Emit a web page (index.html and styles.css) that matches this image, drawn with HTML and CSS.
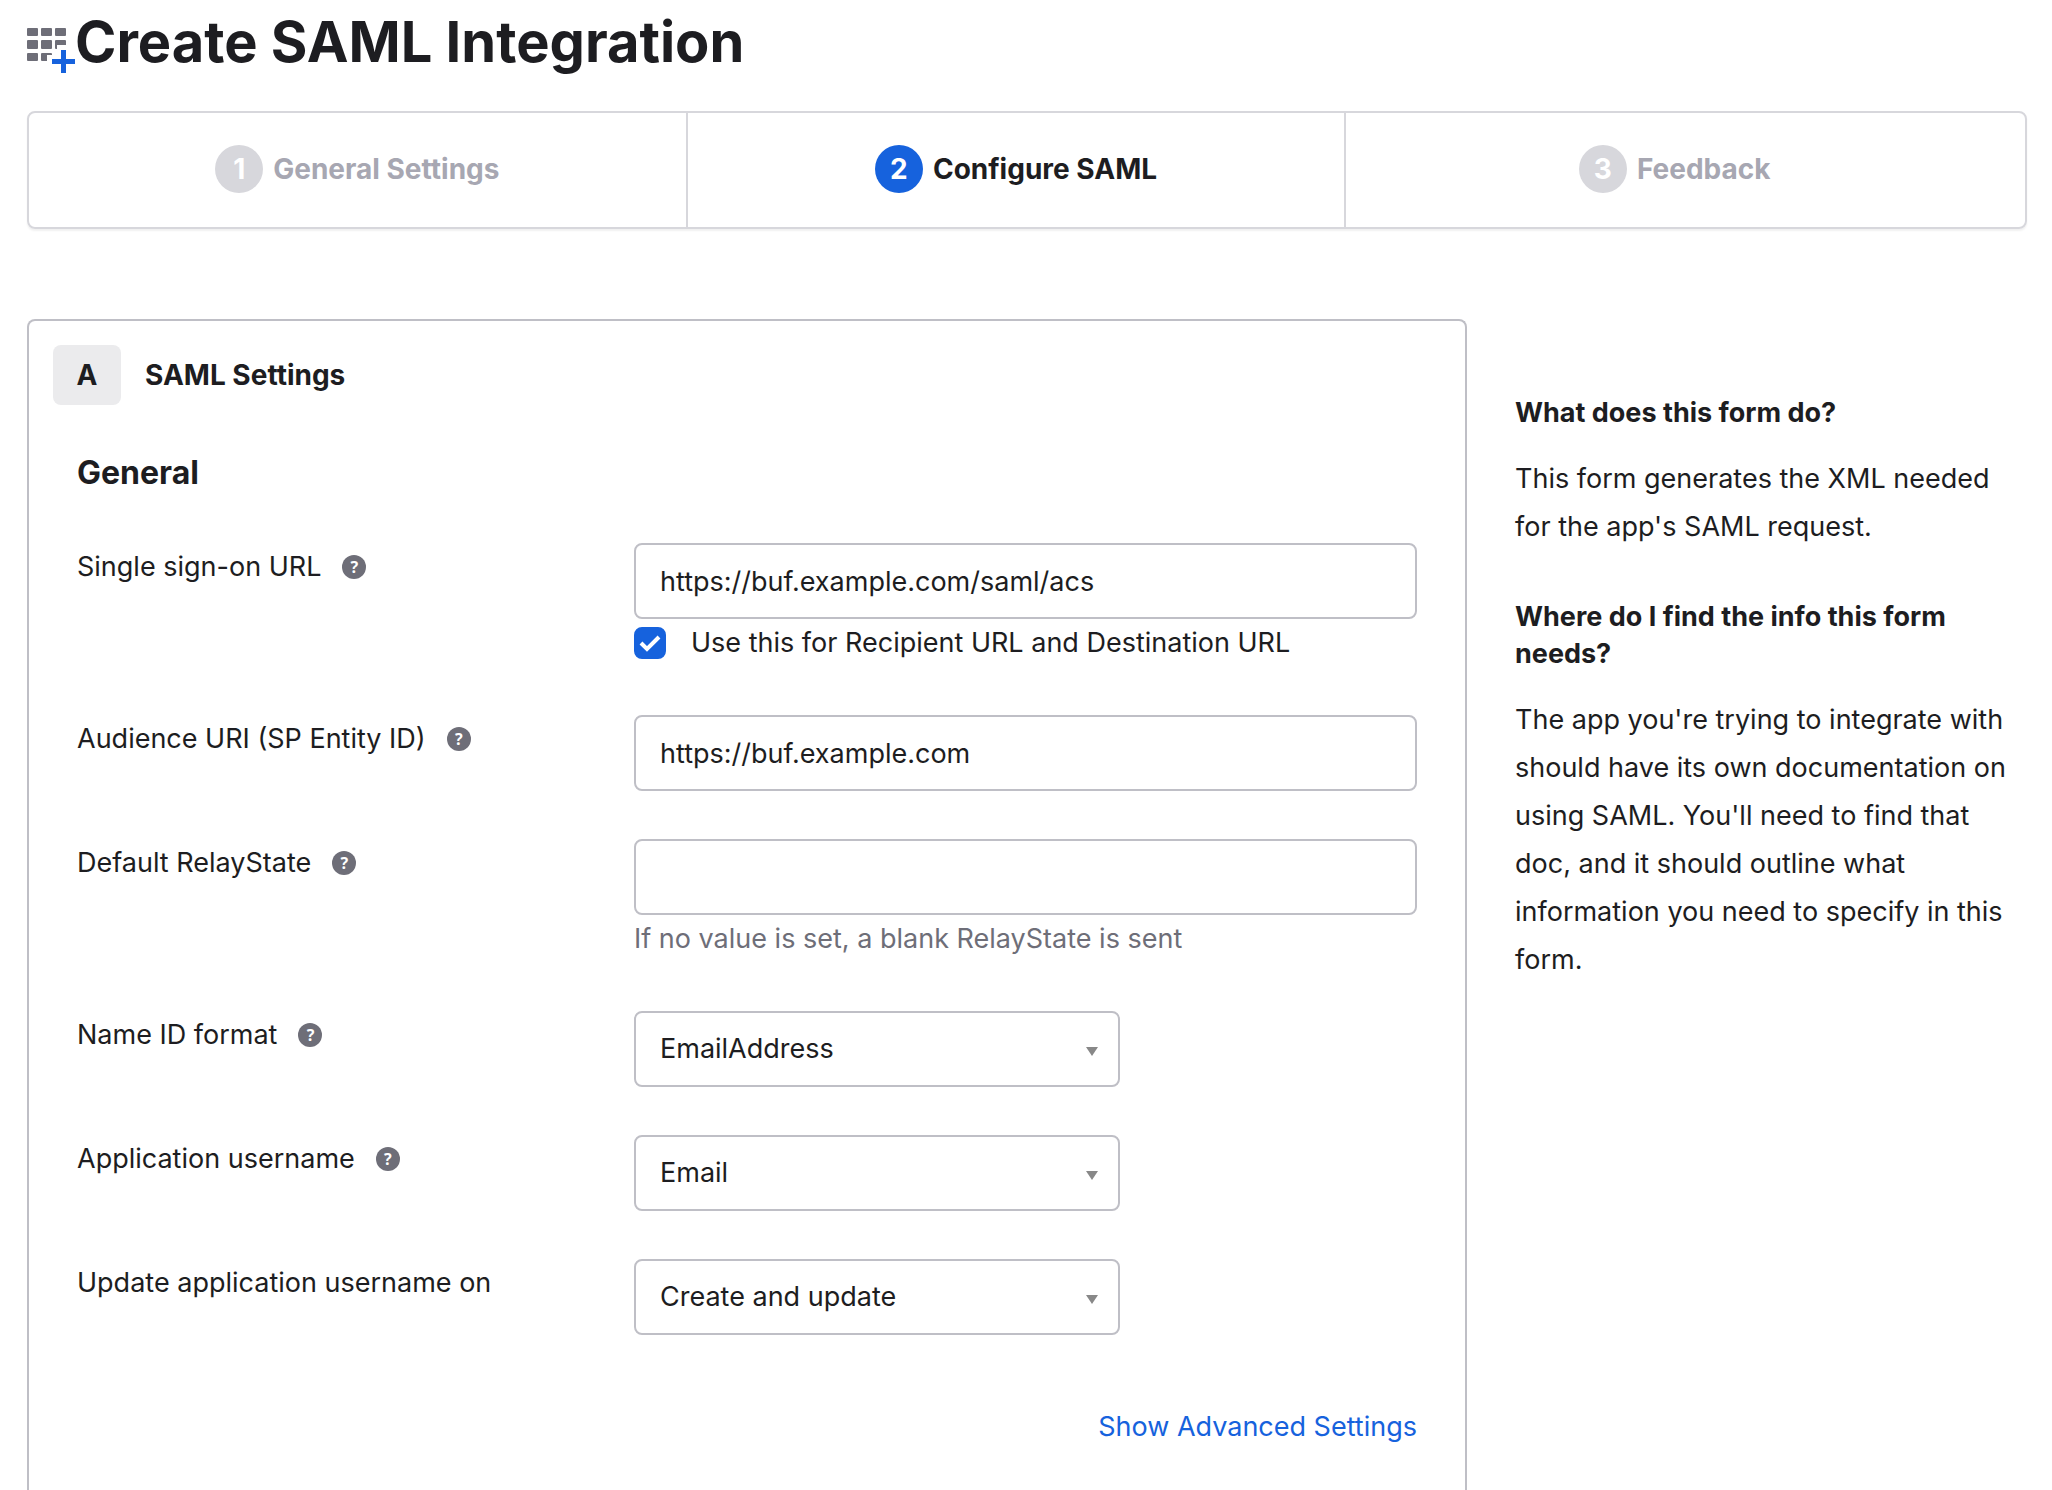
FILE: index.html
```html
<!DOCTYPE html>
<html lang="en">
	<head>
		<meta charset="UTF-8">
		<title>Create SAML Integration</title>
		<meta name="viewport" content="width=device-width, initial-scale=1.0">
		<link rel="stylesheet" href="styles.css">
	</head>
	<body>
		<header>
			<svg class="app-icon" viewBox="0 0 48 46" width="48" height="46" aria-hidden="true">
				<g fill="#6e6e78">
					<rect x="0" y="0" width="11" height="8" rx="1"/>
					<rect x="14" y="0" width="11" height="8" rx="1"/>
					<rect x="28" y="0" width="11" height="8" rx="1"/>
					<rect x="0" y="12" width="11" height="9" rx="1"/>
					<rect x="14" y="12" width="11" height="9" rx="1"/>
					<path d="M29 12h9q1 0 1 1v4h-9v4h-1q-1 0-1-1v-7q0-1 1-1z"/>
					<rect x="0" y="25" width="11" height="8" rx="1"/>
					<path d="M15 25h9q1 0 1 1v1h-5v6h-5q-1 0-1-1v-6q0-1 1-1z"/>
				</g>
				<path fill="#1662dd" d="M34 22h5v9h9v5h-9v9h-5v-9h-9v-5h9z"/>
			</svg>
			<h1>Create SAML Integration</h1>
		</header>
		<ol class="steps">
			<li><span class="num">1</span>General Settings</li>
			<li class="active"><span class="num">2</span>Configure SAML</li>
			<li><span class="num">3</span>Feedback</li>
		</ol>
		<main>
			<form class="panel">
				<div class="panel-head">
					<span class="letter">A</span>
					<h2>SAML Settings</h2>
				</div>
				<div class="panel-body">
					<h3>General</h3>
					<div class="row">
						<div class="name">
							<label for="sso">Single sign-on URL</label>
							<button type="button" class="help" aria-label="Help">?</button>
						</div>
						<div class="field">
							<input id="sso" type="text" value="https://buf.example.com/saml/acs">
							<div class="under">
								<input id="recipient" type="checkbox" checked>
								<svg class="tick" viewBox="0 0 32 32" width="32" height="32" aria-hidden="true"><path d="M7 16l6 6L25 10" fill="none" stroke="#fff" stroke-width="4"/></svg>
								<label for="recipient">Use this for Recipient URL and Destination URL</label>
							</div>
						</div>
					</div>
					<div class="row">
						<div class="name">
							<label for="audience">Audience URI (SP Entity ID)</label>
							<button type="button" class="help" aria-label="Help">?</button>
						</div>
						<div class="field">
							<input id="audience" type="text" value="https://buf.example.com">
						</div>
					</div>
					<div class="row">
						<div class="name">
							<label for="relay">Default RelayState</label>
							<button type="button" class="help" aria-label="Help">?</button>
						</div>
						<div class="field">
							<input id="relay" type="text">
							<div class="under hint">If no value is set, a blank RelayState is sent</div>
						</div>
					</div>
					<div class="row">
						<div class="name">
							<label for="nameid">Name ID format</label>
							<button type="button" class="help" aria-label="Help">?</button>
						</div>
						<div class="field select">
							<select id="nameid"><option>EmailAddress</option></select>
						</div>
					</div>
					<div class="row">
						<div class="name">
							<label for="username">Application username</label>
							<button type="button" class="help" aria-label="Help">?</button>
						</div>
						<div class="field select">
							<select id="username"><option>Email</option></select>
						</div>
					</div>
					<div class="row">
						<div class="name">
							<label for="update">Update application username on</label>
						</div>
						<div class="field select">
							<select id="update"><option>Create and update</option></select>
						</div>
					</div>
					<a class="advanced" href="#">Show Advanced Settings</a>
				</div>
			</form>
			<aside>
				<h4>What does this form do?</h4>
				<p>This form generates the XML needed for the app's SAML request.</p>
				<h4>Where do I find the info this form needs?</h4>
				<p>The app you're trying to integrate with should have its own documentation on using SAML. You'll need to find that doc, and it should outline what information you need to specify in this form.</p>
			</aside>
		</main>
	</body>
</html>
```
FILE: styles.css
```css
* {
	box-sizing: border-box;
}
body {
	display: flex;
	flex-direction: column;
	min-height: 100vh;
	margin: 0;
	padding: 0 25px 0 27px;
	font-family: Inter, "Liberation Sans", sans-serif;
	font-size: 27px;
	line-height: 36px;
	color: #1d1d21;
	background-color: #fff;
}
h1, h2, h3, h4, p {
	margin: 0;
}
header {
	display: flex;
	padding-top: 8px;
}
.app-icon {
	flex: none;
	margin-top: 20px;
}
h1 {
	font-size: 56px;
	line-height: 68px;
	font-weight: 700;
}
.steps {
	display: flex;
	margin: 35px 0 90px;
	padding: 0 22px 0 0;
	list-style: none;
	border: 2px solid #d7d7dc;
	border-radius: 8px;
	box-shadow: 0 2px 2px rgba(0, 0, 0, 0.06);
}
.steps li {
	flex: 1;
	display: flex;
	align-items: center;
	justify-content: center;
	gap: 10px;
	height: 114px;
	padding-bottom: 2px;
	font-size: 28px;
	font-weight: 700;
	color: #a7a7b2;
}
.steps li + li {
	border-left: 2px solid #d7d7dc;
}
.steps .active {
	color: #1d1d21;
}
.num {
	width: 48px;
	height: 48px;
	line-height: 48px;
	text-align: center;
	color: #fff;
	background-color: #d7d7dc;
	border-radius: 50%;
}
.active .num {
	background-color: #1662dd;
}
main {
	flex: 1;
	display: flex;
	gap: 48px;
}
.panel {
	flex: 0 0 72%;
	padding: 24px;
	border: 2px solid #bfbfc6;
	border-bottom: 0;
	border-radius: 8px 8px 0 0;
}
.panel-head {
	display: flex;
	align-items: center;
	gap: 24px;
	font-size: 28px;
	font-weight: 700;
}
.letter {
	width: 68px;
	line-height: 60px;
	text-align: center;
	background-color: #ebebed;
	border-radius: 8px;
}
h2 {
	font-size: 28px;
}
.panel-body {
	padding: 48px 24px 0;
}
h3 {
	margin-bottom: 50px;
	font-size: 32px;
	line-height: 40px;
	font-weight: 700;
}
.row {
	display: grid;
	grid-template-columns: 557px 1fr;
	margin-bottom: 48px;
}
.name {
	display: flex;
	align-items: center;
	gap: 21px;
	height: 48px;
}
.help {
	width: 24px;
	height: 24px;
	padding: 0;
	border: 0;
	border-radius: 50%;
	font: 700 16px/24px "Noto Sans", sans-serif;
	color: #fff;
	background-color: #6e6e78;
}
input[type=text], select {
	display: block;
	width: 100%;
	height: 76px;
	padding: 0 24px;
	border: 2px solid #bfbfc6;
	border-radius: 8px;
	font: inherit;
	color: inherit;
	background-color: #fff;
}
.under {
	position: relative;
	display: flex;
	align-items: center;
	gap: 25px;
	height: 48px;
}
.hint {
	color: #6e6e78;
}
input[type=checkbox] {
	appearance: none;
	width: 32px;
	height: 32px;
	margin: 0;
	border: 2px solid #bfbfc6;
	border-radius: 8px;
}
input[type=checkbox]:checked {
	border-color: #1662dd;
	background-color: #1662dd;
}
.tick {
	position: absolute;
	left: 0;
	pointer-events: none;
}
.select {
	position: relative;
	width: 486px;
}
.select select {
	appearance: none;
}
.select::after {
	content: "";
	position: absolute;
	right: 22px;
	top: 36px;
	border: 6px solid transparent;
	border-top: 9px solid #888;
	border-bottom: 0;
	pointer-events: none;
}
.advanced {
	display: block;
	margin-top: 74px;
	text-align: right;
	color: #1662dd;
	text-decoration: none;
}
aside {
	flex: 1;
	padding-top: 75px;
}
h4 {
	margin-bottom: 24px;
	font-size: 27px;
	line-height: 37px;
	font-weight: 700;
}
aside p {
	margin-bottom: 47px;
	line-height: 48px;
}
```
